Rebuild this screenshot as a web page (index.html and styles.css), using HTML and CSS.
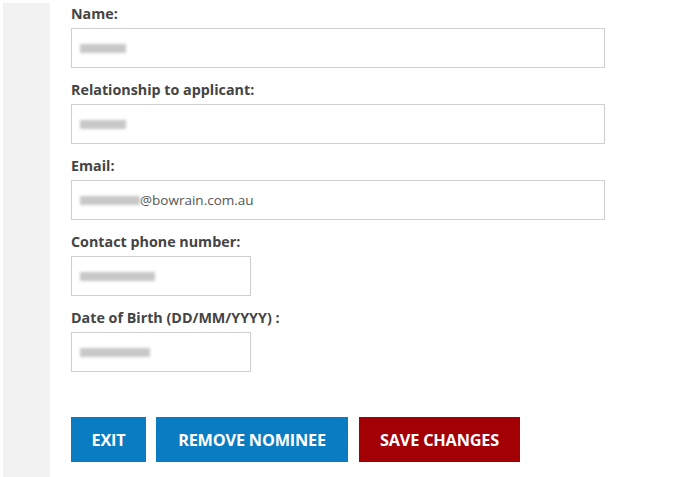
FILE: index.html
```html
<!DOCTYPE html>
<html>
<head>
<meta charset="utf-8">
<link rel="stylesheet" href="styles.css">
</head>
<body>
<div class="page">
  <div class="sidebar"></div>
  <div class="content">
    <div class="field">
      <label class="label">Name:</label>
      <div class="input full"><span class="blur w50"></span></div>
    </div>
    <div class="field">
      <label class="label">Relationship to applicant:</label>
      <div class="input full"><span class="blur w50"></span></div>
    </div>
    <div class="field">
      <label class="label">Email:</label>
      <div class="input full"><span class="blur w60"></span><span class="value">@bowrain.com.au</span></div>
    </div>
    <div class="field">
      <label class="label">Contact phone number:</label>
      <div class="input short"><span class="blur w85"></span></div>
    </div>
    <div class="field">
      <label class="label">Date of Birth (DD/MM/YYYY) :</label>
      <div class="input short"><span class="blur w75"></span></div>
    </div>
    <div class="actions">
      <button class="btn blue exit">EXIT</button>
      <button class="btn blue remove">REMOVE NOMINEE</button>
      <button class="btn red save">SAVE CHANGES</button>
    </div>
  </div>
</div>
</body>
</html>
```
FILE: styles.css
```css
html, body {
  margin: 0;
  padding: 0;
  background: #fff;
  font-family: "Open Sans", "Liberation Sans", sans-serif;
}
.page {
  display: flex;
  height: 477px;
  overflow: hidden;
}
.sidebar {
  width: 47px;
  margin: 3px 0 0 3px;
  background: #f2f2f2;
}
.content {
  padding: 4px 0 0 21px;
  display: flex;
  flex-direction: column;
}
.field {
  display: flex;
  flex-direction: column;
  margin-bottom: 12px;
}
.label {
  font-size: 14.3px;
  font-weight: 700;
  color: #444;
  line-height: 20px;
  height: 20px;
  margin-bottom: 4px;
}
.input {
  box-sizing: border-box;
  height: 40px;
  border: 1px solid #cfcfcf;
  background: #fff;
  display: flex;
  align-items: center;
  padding-left: 8px;
}
.full { width: 534px; }
.short { width: 180px; }
.blur {
  display: inline-block;
  height: 9px;
  background: #c8c8c8;
  filter: blur(1.5px);
}
.w50 { width: 46px; }
.w60 { width: 60px; }
.w75 { width: 70px; }
.w85 { width: 75px; }
.value {
  font-size: 13.5px;
  color: #555;
}
.actions {
  display: flex;
  margin-top: 33px;
}
.btn {
  height: 45px;
  border: none;
  color: #fff;
  font-family: "Open Sans", "Liberation Sans", sans-serif;
  font-weight: 700;
  font-size: 16.3px;
  letter-spacing: -0.2px;
  padding: 0;
}
.blue { background: #0a7cc2; }
.red { background: #a30006; }
.exit { width: 75px; margin-right: 10px; }
.remove { width: 192px; margin-right: 11px; }
.save { width: 161px; }
```
